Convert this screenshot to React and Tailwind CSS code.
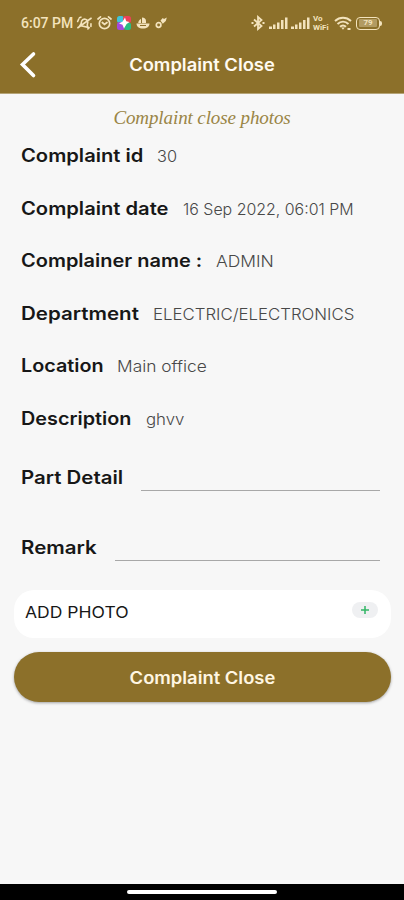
const details = [
  { label: 'Complaint id', value: '30', width: 'w-[136px]', labelScale: 'scale-x-[1.12]', valueScale: 'scale-x-[1.02]' },
  { label: 'Complaint date', value: '16 Sep 2022, 06:01 PM', width: 'w-[162px]', labelScale: 'scale-x-[1.12]', valueScale: 'scale-x-[0.995]' },
  { label: 'Complainer name :', value: 'ADMIN', width: 'w-[195px]', labelScale: 'scale-x-[1.11]', valueScale: 'scale-x-[1.09]' },
  { label: 'Department', value: 'ELECTRIC/ELECTRONICS', width: 'w-[132px]', labelScale: 'scale-x-[1.14]', valueScale: 'scale-x-[1.05]' },
  { label: 'Location', value: 'Main office', width: 'w-[96px]', labelScale: 'scale-x-[1.1]', valueScale: 'scale-x-[1.085]' },
  { label: 'Description', value: 'ghvv', width: 'w-[125px]', labelScale: 'scale-x-[1.1]', valueScale: 'scale-x-[1.05]' },
];

const SignalIcon = () => (
  <svg width="19" height="14" viewBox="0 0 19 14" fill="currentColor">
    <rect x="0" y="10.5" width="3" height="2.5" />
    <rect x="4" y="8.5" width="2.5" height="4.5" />
    <rect x="8" y="6.5" width="2.5" height="6.5" />
    <rect x="12" y="4" width="2.5" height="9" />
    <rect x="16" y="1.5" width="2.5" height="11.5" />
  </svg>
);

const StatusBar = () => (
  <div className="flex h-[45px] items-center pl-[21px] pr-[22px] pt-[1px] text-[#f3e3bd]">
    <span className="w-[55px] shrink-0 whitespace-nowrap font-[Roboto] text-[14px] font-medium">6:07 PM</span>
    <div className="flex items-center gap-[5px]">
      <svg width="17" height="16" viewBox="0 0 17 16" fill="none" stroke="currentColor" strokeWidth="1.6" strokeLinecap="round">
        <path d="M4.5 11.5h8.3l-1.2-2V6.8a3.2 3.2 0 0 0-6.3 0v2.5zM14 2 3 14M2 5.5 1.5 8M3.8 3 2.5 4M15 7.5l.5 2.500M14 11.5l-1 1.500" transform="rotate(12 8.5 8)" />
      </svg>
      <svg className="-ml-px" width="15" height="16" viewBox="0 0 15 16" fill="none" stroke="currentColor" strokeWidth="1.7" strokeLinecap="round">
        <circle cx="7.5" cy="8.5" r="5.2" />
        <path d="M1 4 3.500 1.800M14 4l-2.500-2.200M5.300 7.500l2.200 2 2.500-2" />
      </svg>
      <svg width="14" height="14" viewBox="0 0 14 14">
        <rect width="7" height="7" rx="2.5" fill="#3fc5da" />
        <rect x="6" width="8" height="7" rx="2.5" fill="#ed4058" />
        <rect y="6" width="8" height="8" rx="2.5" fill="#a449dc" />
        <rect x="7" y="6.5" width="7" height="7.5" rx="2.5" fill="#28bd83" />
        <path d="m8 1.500 1.200 3.700L12.500 6 9.600 8 7 12.500 5.500 8.800 2 7.500l3.700-2z" fill="#fff" />
      </svg>
      <svg width="14" height="14" viewBox="0 0 14 14" fill="currentColor">
        <path d="M.5 7.500h13c0 3-2.500 5-6.500 5s-6.500-2-6.500-5zM6 1.500c2.500 0 4 1.200 4 3.500v2H6zM5 3v4H2.200C2.500 5 3.500 3.500 5 3z" />
        <path d="M4 9.500h6" stroke="#8c702a" />
      </svg>
      <svg width="13" height="14" viewBox="0 0 13 14" fill="currentColor">
        <circle cx="3.600" cy="9" r="2.3" fill="none" stroke="currentColor" strokeWidth="1.7" />
        <path d="M5.500 4.500 7.800 2l1.200 1 2.800-1.500-1 3.500-3 2.800z" />
      </svg>
    </div>
    <div className="ml-auto flex items-center gap-[3px]">
      <svg className="mr-px" width="14" height="16" viewBox="0 0 14 16" fill="none" stroke="currentColor" strokeWidth="1.8">
        <path d="m3 4.500 7.500 6.500L7 14V2l3.500 3L3 11.500" />
        <path d="M.5 8h2M11.500 8h2" strokeWidth="2" />
      </svg>
      <SignalIcon />
      <SignalIcon />
      <div className="flex w-[17px] flex-col whitespace-nowrap font-[Roboto] text-[8px] font-bold leading-[9px]">
        <span>Vo</span>
        <span>WiFi</span>
      </div>
      <svg className="ml-px" width="18" height="15" viewBox="0 0 18 15" fill="none" stroke="currentColor" strokeWidth="2">
        <path d="M1 5c4.800-4.200 11.200-4.200 16 0M3.500 8c3.300-3 7.700-3 11 0M6 10.800c2-1.800 4-1.800 6 0" />
        <path d="m7.200 11.500 1.800 2.300 1.800-2.300zM13.500 12h3v2h-3z" fill="currentColor" stroke="none" />
      </svg>
      <div className="ml-px flex items-center">
        <div className="flex h-[13px] w-[24px] items-center justify-center rounded-[4px] border-[1.5px] border-current">
          <span className="flex h-[8px] w-[18px] items-center justify-center rounded-[1px] bg-[#cbb888]/60 font-[Roboto] text-[8px] font-bold leading-none">79</span>
        </div>
        <div className="h-[5px] w-[2px] rounded-r bg-current" />
      </div>
    </div>
  </div>
);

const Field = ({ label, width, labelScale }) => (
  <div className="flex h-[70px] pl-[21px] pr-6">
    <label className={`shrink-0 whitespace-nowrap pt-px text-[18px] font-semibold leading-6 ${width}`}>
      <span className={`inline-block origin-left ${labelScale}`}>{label}</span>
    </label>
    <input type="text" aria-label={label} className="h-[26px] min-w-0 flex-1 border-b border-[#a8a8a8] bg-transparent outline-none" />
  </div>
);

const App = () => {
  return (
    <div className="flex h-[900px] w-[404px] flex-col overflow-hidden bg-[#f7f7f7] font-[Inter,sans-serif] text-[#171717]">
      <header className="h-[94px] shrink-0 border-b border-[#b5a477] bg-[#8c702a]">
        <StatusBar />
        <div className="grid h-[40px] grid-cols-[40px_1fr_40px] items-center">
          <button aria-label="Back" className="pl-[19px]">
            <svg width="18" height="28" viewBox="0 0 18 28" fill="none" stroke="#fff" strokeWidth="3.6" strokeLinecap="round" strokeLinejoin="miter">
              <path d="M14.500 3 3.500 13.500l11 11" />
            </svg>
          </button>
          <h1 className="scale-x-[1.08] whitespace-nowrap pt-[2px] text-center text-[17px] font-semibold text-[#fffaf0]">Complaint Close</h1>
        </div>
      </header>

      <main className="flex flex-1 flex-col">
        <p className="mt-[11px] h-[26px] whitespace-nowrap text-center font-['Liberation_Serif',serif] text-[19px] italic leading-[26px] tracking-[-0.1px] text-[#9a8546]">
          Complaint close photos
        </p>
        <div className="mt-[12px] flex flex-col">
          {details.map((item) => (
            <div key={item.label} className="flex h-[52.6px] items-start whitespace-nowrap pl-[21px]">
              <span className={`shrink-0 pt-px text-[18px] font-semibold leading-6 ${item.width}`}>
                <span className={`inline-block origin-left ${item.labelScale}`}>{item.label}</span>
              </span>
              <span className={`origin-left text-[16px] font-light leading-[26px] text-[#484848] ${item.valueScale}`}>{item.value}</span>
            </div>
          ))}
        </div>

        <div className="mt-[6px] flex flex-col">
          <Field label="Part Detail" width="w-[120px]" labelScale="scale-x-[1.135]" />
          <Field label="Remark" width="w-[94px]" labelScale="scale-x-[1.14]" />
        </div>

        <div className="ml-[14px] mr-[13px] -mt-[15px] flex h-[48px] items-start justify-between rounded-[20px] bg-white pl-[11px] pr-[13px]">
          <span className="mt-[10px] origin-left scale-x-[1.095] whitespace-nowrap text-[16px] leading-6">ADD PHOTO</span>
          <button aria-label="Add photo" className="mt-[12px] flex h-[16px] w-[26px] items-center justify-center rounded-full bg-[#eff0f2]">
            <svg className="-ml-px" width="8" height="8" viewBox="0 0 8 8" stroke="#32b565" strokeWidth="1.5">
              <path d="M4 0v8M0 4h8" />
            </svg>
          </button>
        </div>

        <button className="ml-[14px] mr-[13px] mt-[14px] h-[50px] shrink-0 whitespace-nowrap rounded-full bg-[#8c702a] text-[17px] font-semibold text-[#fff6e2] shadow-[0_1px_3px_rgba(0,0,0,0.35)]">
          <span className="inline-block scale-x-[1.08] pt-1">Complaint Close</span>
        </button>
      </main>

      <footer className="flex h-[16px] shrink-0 items-start justify-center bg-black pt-[6px]">
        <div className="h-[4px] w-[150px] rounded-full bg-white" />
      </footer>
    </div>
  );
};

export default App;
